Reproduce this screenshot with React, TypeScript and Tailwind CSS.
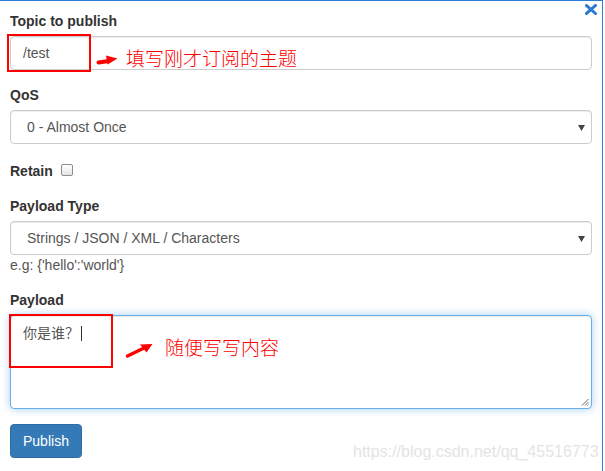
import { ReactNode } from 'react';

function Label({ children }: { children: ReactNode }) {
  return <label className="mb-[5px] block font-bold text-[#333]">{children}</label>;
}

function SelectBox({ value }: { value: string }) {
  return (
    <div className="relative flex h-[34px] items-center rounded-[4px] border border-[#ccc] bg-white pl-[16px] text-[#555] shadow-[inset_0_1px_1px_rgba(0,0,0,0.075)]">
      {value}
      <svg className="absolute right-[6px] top-[14px]" width="7" height="6" viewBox="0 0 7 6">
        <polygon points="0,0 7,0 3.5,6" fill="#444" />
      </svg>
    </div>
  );
}

export default function App() {
  return (
    <div className="relative h-[471px] w-[603px] overflow-hidden border-r border-t border-[#2b7bd5] bg-white pl-[10px] pr-[10px] pt-[10px] font-['Liberation_Sans','Noto_Sans_CJK_SC',Arial,sans-serif] text-[14px] leading-[20px] text-[#333]">
      {/* close */}
      <svg className="absolute left-[585px] top-[3px]" width="12" height="11" viewBox="0 0 12 11">
        <path d="M1.5 1.5 L10.5 9.5 M10.5 1.5 L1.5 9.5" stroke="#2a7ad3" strokeWidth="3" strokeLinecap="square" />
      </svg>

      <div className="mb-[15px]">
        <Label>Topic to publish</Label>
        <div className="flex h-[34px] items-center rounded-[4px] border border-[#ccc] bg-white px-[12px] text-[#555] shadow-[inset_0_1px_1px_rgba(0,0,0,0.075)]">
          /test
        </div>
      </div>

      <div className="mb-[15px]">
        <Label>QoS</Label>
        <SelectBox value="0 - Almost Once" />
      </div>

      <div className="mb-[15px] flex items-start pt-[2px]">
        <span className="font-bold">Retain</span>
        <span className="ml-[8px] mt-[3px] h-[12px] w-[12px] rounded-[2px] border border-[#8e8e8e] bg-gradient-to-b from-white to-[#e4e4e4]" />
      </div>

      <div className="mb-[15px]">
        <Label>Payload Type</Label>
        <SelectBox value="Strings / JSON / XML / Characters" />
        <p className="text-[#555]">e.g: {"{'hello':'world'}"}</p>
      </div>

      <div className="mb-[15px]">
        <Label>Payload</Label>
        <div className="relative h-[94px] rounded-[4px] border border-[#66afe9] bg-white px-[12px] py-[6px] text-[#555] shadow-[inset_0_1px_1px_rgba(0,0,0,0.075),0_0_8px_rgba(102,175,233,0.6)]">
          <span className="font-['Noto_Sans_CJK_SC',sans-serif]">你是谁？</span>
          <span className="ml-[2px] inline-block h-[15px] w-px translate-y-[3px] bg-[#333]" />
          <svg className="absolute bottom-[2px] right-[2px]" width="8" height="8" viewBox="0 0 8 8">
            <path d="M7.5 1 L1 7.5 M7.5 4 L4 7.5 M7.5 6.5 L6.5 7.5" stroke="#666" strokeWidth="1" />
          </svg>
        </div>
      </div>

      <button
        type="button"
        className="h-[34px] rounded-[4px] border border-[#2e6da4] bg-[#337ab7] px-[12px] text-white"
      >
        Publish
      </button>

      {/* annotations */}
      <div className="absolute left-[7px] top-[33px] h-[38px] w-[84px] border-2 border-[#f00]" />
      <svg className="absolute left-[96px] top-[52px]" width="22" height="13" viewBox="0 0 22 13">
        <path d="M2.5 9.5 L13 8" stroke="#f00" strokeWidth="4" strokeLinecap="round" />
        <polygon points="10,2.5 21.5,5.5 11.5,11.5" fill="#f00" />
      </svg>
      <div className="absolute left-[126px] top-[47px] font-['Noto_Sans_CJK_SC',sans-serif] text-[19px] font-light leading-none text-[#f00]">
        填写刚才订阅的主题
      </div>

      <div className="absolute left-[9px] top-[313px] h-[54px] w-[104px] border-2 border-[#f00]" />
      <svg className="absolute left-[125px] top-[340px]" width="30" height="18" viewBox="0 0 30 18">
        <path d="M2.5 15 L19 7" stroke="#f00" strokeWidth="3.5" strokeLinecap="round" />
        <polygon points="15,3.5 27.5,3 21.5,11.5" fill="#f00" />
      </svg>
      <div className="absolute left-[165px] top-[336px] font-['Noto_Sans_CJK_SC',sans-serif] text-[19px] font-light leading-none text-[#f00]">
        随便写写内容
      </div>

      <div className="absolute left-[353px] top-[443px] text-[16px] leading-none text-[#e4e4e4]">
        https://blog.csdn.net/qq_45516773
      </div>
    </div>
  );
}
